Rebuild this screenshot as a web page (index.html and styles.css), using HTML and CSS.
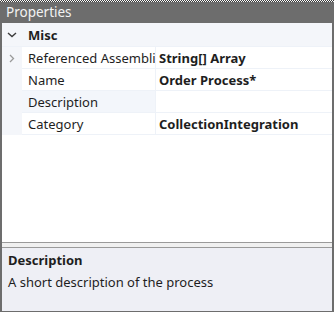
FILE: index.html
```html
<!DOCTYPE html>
<html lang="en">
  <head>
    <meta charset="UTF-8" />
    <title>Properties</title>
    <link rel="stylesheet" href="styles.css">
  </head>
  <body>
    <div class="window">
      <div class="dots"></div>
      <div class="title">Properties</div>

      <div class="grid">
        <div class="category">
          <span class="toggle">
            <svg width="10" height="6" viewBox="0 0 10 6"><path d="M1 1 L5 4.5 L9 1" fill="none" stroke="#3c3c3c" stroke-width="1.4"/></svg>
          </span>
          <span class="category-name">Misc</span>
        </div>

        <div class="row">
          <span class="gutter">
            <svg width="6" height="9" viewBox="0 0 6 9"><path d="M1 1 L4.5 4.5 L1 8" fill="none" stroke="#9a9a9a" stroke-width="1.3"/></svg>
          </span>
          <span class="name"><span class="clip">Referenced Assemblies</span></span>
          <span class="value">String[] Array</span>
        </div>
        <div class="row">
          <span class="gutter"></span>
          <span class="name">Name</span>
          <span class="value">Order Process*</span>
        </div>
        <div class="row selected">
          <span class="gutter"></span>
          <span class="name">Description</span>
          <span class="value"></span>
        </div>
        <div class="row">
          <span class="gutter"></span>
          <span class="name">Category</span>
          <span class="value">CollectionIntegration</span>
        </div>
      </div>

      <div class="splitter"></div>

      <div class="desc">
        <div class="desc-title">Description</div>
        <div class="desc-text">A short description of the process</div>
      </div>
    </div>
  </body>
</html>
```

FILE: styles.css
```css
* {
  margin: 0;
  padding: 0;
  box-sizing: border-box;
  font-family: "Noto Sans", "Open Sans", sans-serif;
}
body {
  background-color: #ffffff;
}
.window {
  width: 334px;
  height: 312px;
  display: flex;
  flex-direction: column;
  background-color: #6d6d6d;
  padding: 0 2px 1px 2px;
}
.dots {
  height: 2px;
  margin: 0 -2px;
  background: repeating-conic-gradient(#3a3a3a 0 25%, #ffffff 0 50%) 0 0 / 2px 2px;
}
.title {
  height: 21px;
  line-height: 20px;
  padding-left: 4px;
  color: #f2f2f2;
  font-size: 13.5px;
}
.grid {
  flex: 1;
  background-color: #ffffff;
  font-size: 13px;
  color: #1e1e1e;
}
.category {
  height: 24px;
  display: flex;
  align-items: center;
  background-color: #f4f6fa;
  border-bottom: 1px solid #eef2f8;
}
.toggle {
  width: 20px;
  display: flex;
  justify-content: center;
  padding-top: 1px;
}
.category-name {
  font-weight: bold;
  padding-left: 6px;
}
.row {
  height: 22px;
  display: grid;
  grid-template-columns: 20px 134px 1fr;
}
.gutter {
  background-color: #f4f6fa;
  display: flex;
  align-items: center;
  justify-content: center;
}
.name,
.value {
  display: flex;
  align-items: center;
  border-bottom: 1px solid #eef2f8;
  white-space: nowrap;
  overflow: hidden;
}
.name {
  padding-left: 6px;
  border-right: 1px solid #eef2f8;
}
.clip {
  display: block;
  overflow: hidden;
  width: 127px;
}
.value {
  padding-left: 3px;
  font-weight: bold;
}
.selected .name {
  background-color: #f3f6fb;
}
.splitter {
  height: 6px;
  border-top: 1px solid #9a9a9a;
  border-bottom: 1px solid #9a9a9a;
  background-color: #f0f0f0;
}
.desc {
  height: 63px;
  background-color: #eeeff5;
  padding: 1px 6px 0;
  font-size: 13px;
  color: #1e1e1e;
}
.desc-title {
  font-weight: bold;
  line-height: 22px;
}
.desc-text {
  line-height: 22px;
}
```
